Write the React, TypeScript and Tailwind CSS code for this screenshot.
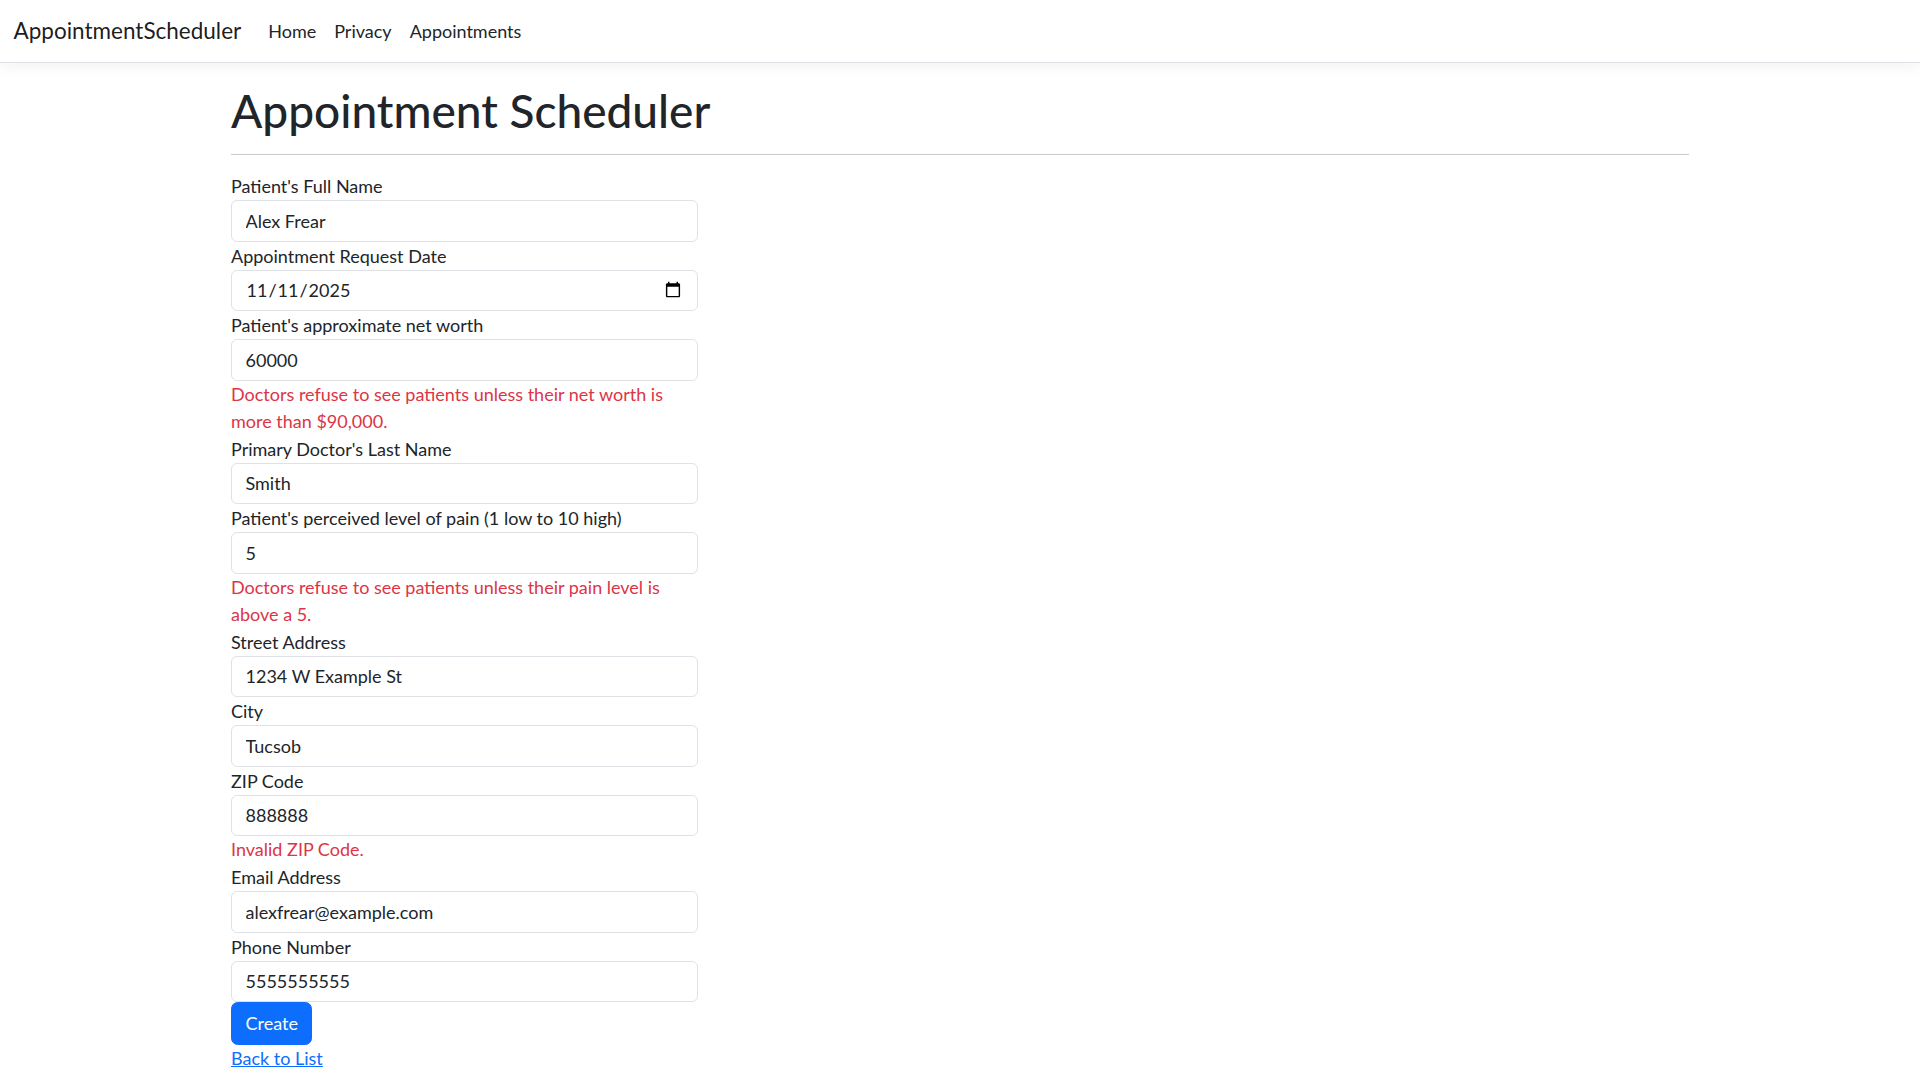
import React from 'react';

const font = { fontFamily: 'Lato, "Liberation Sans", sans-serif' };

type Field = {
  label: string;
  value: string;
  type?: string;
  error?: string;
};

const fields: Field[] = [
  { label: "Patient's Full Name", value: 'Alex Frear' },
  { label: 'Appointment Request Date', value: '2025-11-11', type: 'date' },
  {
    label: "Patient's approximate net worth",
    value: '60000',
    error: 'Doctors refuse to see patients unless their net worth is more than $90,000.',
  },
  { label: "Primary Doctor's Last Name", value: 'Smith' },
  {
    label: "Patient's perceived level of pain (1 low to 10 high)",
    value: '5',
    error: 'Doctors refuse to see patients unless their pain level is above a 5.',
  },
  { label: 'Street Address', value: '1234 W Example St' },
  { label: 'City', value: 'Tucsob' },
  { label: 'ZIP Code', value: '888888', error: 'Invalid ZIP Code.' },
  { label: 'Email Address', value: 'alexfrear@example.com' },
  { label: 'Phone Number', value: '5555555555' },
];

function FormField({ field }: { field: Field }) {
  return (
    <div>
      <label className="block text-[18px] leading-[28px] text-[#212529]">{field.label}</label>
      <input
        type={field.type ?? 'text'}
        defaultValue={field.value}
        style={font}
        className="block h-[41.5px] w-full rounded-[6px] border border-[#dee2e6] bg-white px-[13.5px] text-[18px] text-[#212529] outline-none"
      />
      {field.error && (
        <span className="block text-[18px] leading-[27px] text-[#dc3545]">{field.error}</span>
      )}
    </div>
  );
}

export default function App() {
  return (
    <div className="min-h-screen bg-white text-[#212529]" style={font}>
      <header>
        <nav className="flex h-[63px] items-center border-b border-[#dee2e6] bg-white px-[13.5px] shadow-[0_4.5px_13.5px_rgba(0,0,0,0.05)]">
          <a className="mr-[18px] text-[22.5px] leading-[34px] text-[rgba(0,0,0,0.9)]">AppointmentScheduler</a>
          <ul className="flex">
            <li><a className="block px-[9px] text-[18px] leading-[27px] text-[#212529]">Home</a></li>
            <li><a className="block px-[9px] text-[18px] leading-[27px] text-[#212529]">Privacy</a></li>
            <li><a className="block px-[9px] text-[18px] leading-[27px] text-[#212529]">Appointments</a></li>
          </ul>
        </nav>
      </header>

      <main className="mx-auto w-[1458px] pb-6">
        <h1 className="mt-[21px] text-[46px] font-medium leading-[54px]">Appointment Scheduler</h1>
        <hr className="mt-[16px] mb-[17px] border-t border-[#c8c9ca]" />

        <div className="w-[467px]">
          <form>
            {fields.map((f) => (
              <FormField key={f.label} field={f} />
            ))}
            <button
              type="button"
              className="rounded-[6.75px] border border-[#0d6efd] bg-[#0d6efd] px-[13.5px] py-[6.75px] text-[18px] leading-[27px] text-white"
            >
              Create
            </button>
          </form>
          <div>
            <a href="#" className="text-[18px] leading-[27px] text-[#0d6efd] underline">Back to List</a>
          </div>
        </div>
      </main>
    </div>
  );
}
